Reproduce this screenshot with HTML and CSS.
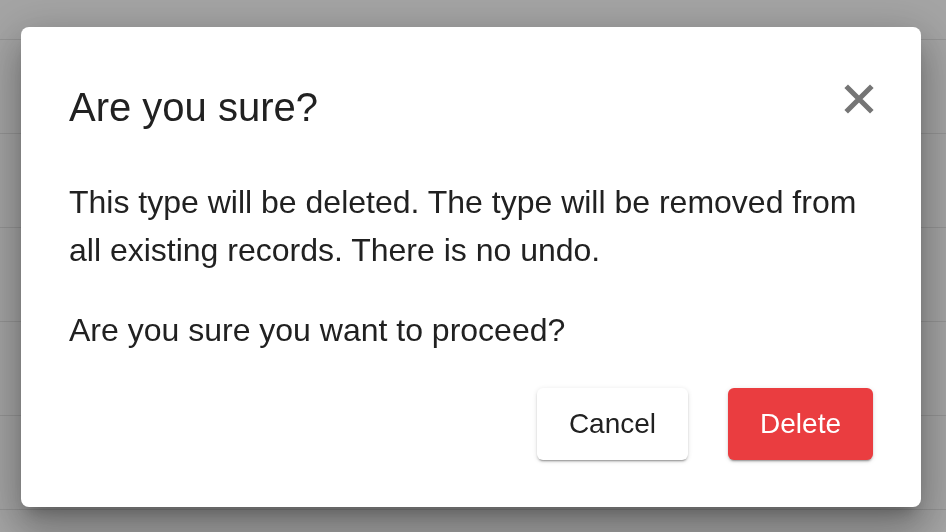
FILE: index.html
```html
<!DOCTYPE html>
<html lang="en">
<head>
<meta charset="utf-8">
<title>Are you sure?</title>
<link rel="stylesheet" href="styles.css">
</head>
<body>
<div class="page">
  <div class="row row-first"></div>
  <div class="row"></div>
  <div class="row"></div>
  <div class="row"></div>
  <div class="row"></div>
  <div class="row"></div>
</div>
<div class="overlay">
  <div class="modal" role="dialog" aria-labelledby="dlg-title">
    <div class="modal-header">
      <h2 class="modal-title" id="dlg-title">Are you sure?</h2>
      <button class="close-btn" aria-label="Close">
        <svg viewBox="0 0 24 24" width="50" height="50"><path fill="none" stroke="currentColor" stroke-width="2.45" stroke-linecap="butt" d="M5.85 5.85L18.15 18.15M18.15 5.85L5.85 18.15"/></svg>
      </button>
    </div>
    <div class="modal-body">
      <p class="text">This type will be deleted. The type will be removed from all existing records. There is no undo.</p>
      <p class="text">Are you sure you want to proceed?</p>
    </div>
    <div class="modal-actions">
      <button class="btn btn-cancel">Cancel</button>
      <button class="btn btn-delete">Delete</button>
    </div>
  </div>
</div>
</body>
</html>
```

FILE: styles.css
```css
* { box-sizing: border-box; }
html, body { margin: 0; padding: 0; }
body {
  font-family: "Liberation Sans", Arial, sans-serif;
  background: #ffffff;
  width: 946px;
  height: 532px;
  overflow: hidden;
}
.page {
  display: flex;
  flex-direction: column;
}
.row {
  height: 94px;
  border-bottom: 1px solid #e6e6e6;
}
.row-first { height: 40px; }
.overlay {
  position: fixed;
  inset: 0;
  background: rgba(0, 0, 0, 0.355);
  display: flex;
  align-items: flex-start;
  justify-content: flex-start;
}
.modal {
  margin: 27px 0 0 21px;
  width: 900px;
  height: 480px;
  background: #ffffff;
  border-radius: 8px;
  padding: 50px 48px 47px;
  box-shadow: 0 11px 15px -7px rgba(0,0,0,.22), 0 24px 38px 3px rgba(0,0,0,.2), 0 9px 46px 8px rgba(0,0,0,.16);
  display: flex;
  flex-direction: column;
  color: #212121;
}
.modal-header {
  display: flex;
  justify-content: space-between;
  align-items: flex-start;
  height: 60px;
}
.modal-title {
  margin: 0;
  font-size: 40px;
  line-height: 60px;
  font-weight: 400;
}
.close-btn {
  margin: -3px -11px 0 0;
  padding: 0;
  border: 0;
  background: none;
  width: 50px;
  height: 50px;
  color: #757575;
  display: flex;
}
.modal-body { margin-top: 41px; }
.text {
  margin: 0 0 32px;
  font-size: 32px;
  line-height: 48px;
}
.text:last-child { margin-bottom: 0; }
.modal-actions {
  margin-top: 34px;
  display: flex;
  justify-content: flex-end;
  gap: 40px;
}
.btn {
  height: 72px;
  padding: 0 32px;
  border: 0;
  border-radius: 6px;
  font-family: "Liberation Sans", Arial, sans-serif;
  font-size: 28px;
  box-shadow: 0 3px 1px -2px rgba(0,0,0,.2), 0 2px 2px 0 rgba(0,0,0,.14), 0 1px 5px 0 rgba(0,0,0,.12);
}
.btn-cancel { background: #ffffff; color: #212121; }
.btn-delete { background: #ea3d40; color: #ffffff; }
```
